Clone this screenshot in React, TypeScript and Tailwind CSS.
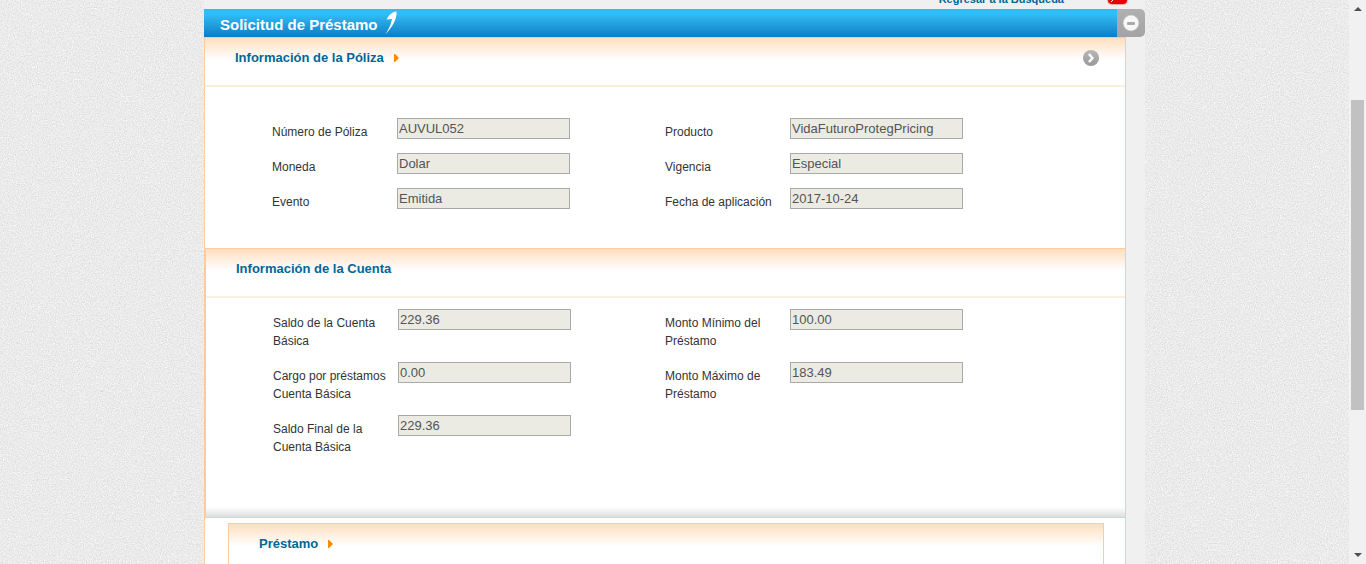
import React, { useId } from "react";

type FieldData = { label: string; value: string };

const policy: FieldData[] = [
  { label: "Número de Póliza", value: "AUVUL052" },
  { label: "Producto", value: "VidaFuturoProtegPricing" },
  { label: "Moneda", value: "Dolar" },
  { label: "Vigencia", value: "Especial" },
  { label: "Evento", value: "Emitida" },
  { label: "Fecha de aplicación", value: "2017-10-24" },
];

const account: FieldData[] = [
  { label: "Saldo de la Cuenta Básica", value: "229.36" },
  { label: "Monto Mínimo del Préstamo", value: "100.00" },
  { label: "Cargo por préstamos Cuenta Básica", value: "0.00" },
  { label: "Monto Máximo de Préstamo", value: "183.49" },
  { label: "Saldo Final de la Cuenta Básica", value: "229.36" },
];

function Field({ label, value }: FieldData) {
  const id = useId();
  return (
    <div className="flex items-start">
      <label htmlFor={id} className="mt-[5px] w-[125px] pr-2 text-[12px] leading-[18px] text-[#333]">
        {label}
      </label>
      <input
        id={id}
        readOnly
        defaultValue={value}
        className="h-[21px] w-[173px] border border-[#a9a9a9] bg-[#ebebe4] px-px text-[13px] text-[#545454] outline-none"
      />
    </div>
  );
}

function SectionHeader({ title, arrow, children }: { title: string; arrow?: boolean; children?: React.ReactNode }) {
  return (
    <header className="flex h-[49px] items-start justify-between border-b-2 border-[#ffeedd] bg-linear-to-b from-[#ffdfbf] to-white to-[22px] pt-[10px] pr-[26px] pl-[30px]">
      <h2 className="flex items-center gap-[10px] text-[13px] leading-[20px] font-bold text-[#006699]">
        {title}
        {arrow && (
          <svg width="5" height="8" viewBox="0 0 5 8" aria-hidden="true">
            <path d="M0 0 H1 L5 4 L1 8 H0 Z" fill="#ff8800" />
          </svg>
        )}
      </h2>
      {children}
    </header>
  );
}

function PaperTexture() {
  return (
    <svg className="fixed inset-0 -z-10 h-full w-full" aria-hidden="true">
      <filter id="paper" x="0" y="0" width="100%" height="100%" colorInterpolationFilters="sRGB">
        <feTurbulence type="fractalNoise" baseFrequency="0.83" numOctaves="3" seed="4" />
        <feColorMatrix values="0.13 0.13 0 0 0.79  0.13 0.13 0 0 0.79  0.13 0.13 0 0 0.79  0 0 0 0 1" />
      </filter>
      <rect width="100%" height="100%" filter="url(#paper)" />
    </svg>
  );
}

function Scrollbar() {
  return (
    <aside className="flex w-[17px] shrink-0 flex-col items-center bg-[#f1f1f1] pt-[7px] pb-[7px]" aria-hidden="true">
      <svg width="8" height="4" viewBox="0 0 8 4">
        <path d="M4 0 L8 4 H0 Z" fill="#505050" />
      </svg>
      <div className="mt-[89px] h-[310px] w-[13px] bg-[#c1c1c1]" />
      <svg className="mt-auto" width="8" height="4" viewBox="0 0 8 4">
        <path d="M0 0 H8 L4 4 Z" fill="#505050" />
      </svg>
    </aside>
  );
}

export default function App() {
  return (
    <div className="isolate flex h-screen overflow-hidden font-['Liberation_Sans',Arial,sans-serif]">
      <PaperTexture />
      <div className="flex min-w-0 flex-1 justify-center overflow-hidden">
        <main className="flex w-[941px] flex-col bg-[#f0f0f0]">
          <nav className="flex h-[9px] shrink-0 items-end justify-end overflow-hidden pr-[17px]">
            <a href="#busqueda" className="mr-[43px] mb-[3px] text-[11px] leading-[14px] font-bold text-[#006699]">
              Regresar a la Búsqueda
            </a>
            <svg className="mb-[4px]" width="21" height="21" viewBox="0 0 21 21" aria-hidden="true">
              <rect width="21" height="21" rx="5" fill="#f4a6a6" />
              <rect x="1" width="19" height="20" rx="4" fill="#e80000" />
              <path d="M4 18 L6 16" stroke="#fff" strokeWidth="1" />
            </svg>
          </nav>
          <div className="flex h-[28px] shrink-0">
            <div className="flex flex-1 items-center gap-[7px] bg-linear-to-b from-[#33bbf3] from-20% to-[#0a7dc4] pl-[16px]">
              <h1 className="pt-[3px] text-[15px] leading-[20px] font-bold text-white">Solicitud de Préstamo</h1>
              <svg width="12" height="24" viewBox="0 0 12 24" aria-hidden="true">
                <path d="M11.5 0.5 C12 7 8.5 15 0.3 23.5 C4 18 6.5 12 7 8 L1.5 8.5 C4 4 7 1 11.5 0.5 Z" fill="#fff" />
              </svg>
            </div>
            <button type="button" aria-label="Minimizar" className="flex w-[28px] items-center justify-center rounded-r-[5px] bg-linear-to-b from-[#b0b0b0] to-[#a3a3a3]">
              <svg width="18" height="18" viewBox="0 0 18 18" aria-hidden="true">
                <circle cx="9" cy="9" r="8.3" fill="#c9c9c9" />
                <circle cx="9" cy="9" r="7.4" fill="#f8f8f8" />
                <rect x="5" y="8" width="8" height="3" rx="1" fill="#aaa" />
              </svg>
            </button>
          </div>
          <div className="mr-[19px] flex-1 border-x border-[#ffcc99] bg-white">
            <section className="border-t border-[#ffcc99]">
              <SectionHeader title="Información de la Póliza" arrow>
                <button type="button" aria-label="Abrir" className="mt-[2px]">
                  <svg width="16" height="16" viewBox="0 0 16 16" aria-hidden="true">
                    <defs>
                      <linearGradient id="disc" x1="0" y1="0" x2="0" y2="1">
                        <stop offset="0" stopColor="#b8b8b8" />
                        <stop offset="1" stopColor="#989898" />
                      </linearGradient>
                    </defs>
                    <circle cx="8" cy="8" r="8" fill="url(#disc)" />
                    <path d="M6 4 L9.5 8 L6 12" fill="none" stroke="#fff" strokeWidth="2.4" />
                  </svg>
                </button>
              </SectionHeader>
              <div className="grid grid-cols-[298px_298px] gap-x-[95px] gap-y-3 pt-[31px] pb-[37px] pl-[67px]">
                {policy.map((f) => (
                  <Field key={f.label} {...f} />
                ))}
              </div>
            </section>
            <section className="border-t border-b border-l border-[#ffcc99]">
              <SectionHeader title="Información de la Cuenta" />
              <div className="grid grid-cols-[298px_298px] gap-x-[94px] gap-y-3 pt-[11px] pb-[51px] pl-[67px]">
                {account.map((f) => (
                  <Field key={f.label} {...f} />
                ))}
              </div>
              <div className="h-[10px] bg-linear-to-b from-white to-[#dedede]" />
            </section>
            <section className="mt-[5px] mr-[21px] ml-[23px] border border-[#ffcc99]">
              <SectionHeader title="Préstamo" arrow />
            </section>
          </div>
        </main>
      </div>
      <Scrollbar />
    </div>
  );
}
